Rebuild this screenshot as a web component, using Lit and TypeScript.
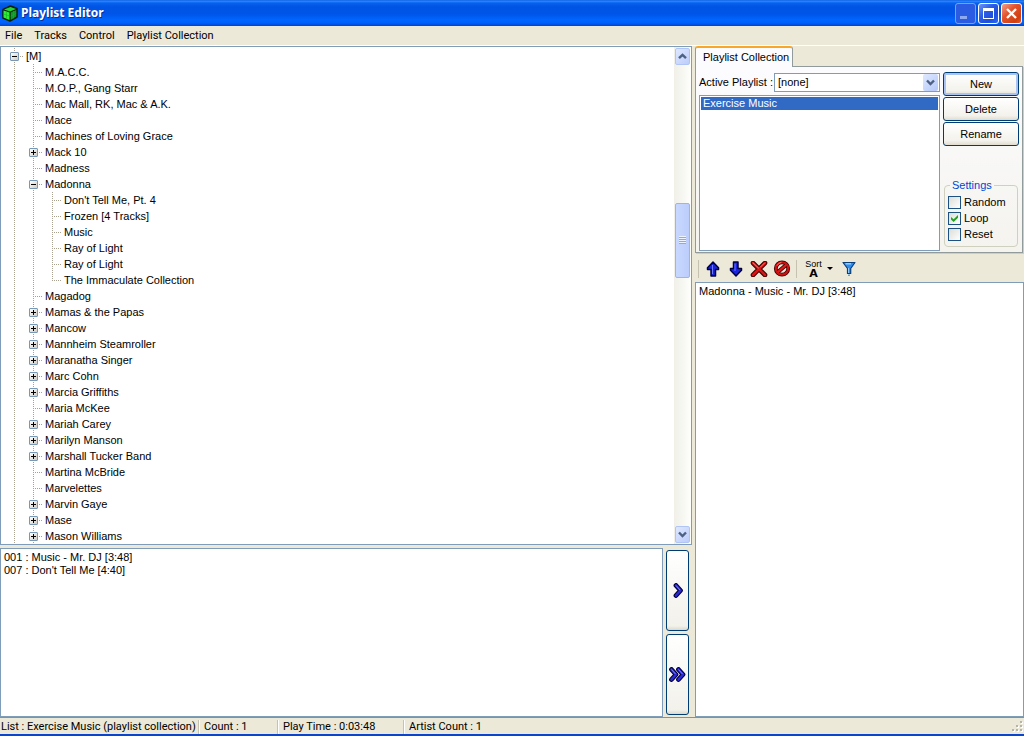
import { LitElement, html, css, svg } from "lit";
import { customElement, state } from "lit/decorators.js";

type Row = { depth: number; text: string; box?: "plus" | "minus"; last?: boolean };

const rows: Row[] = [
  { depth: 0, text: "[M]", box: "minus" },
  { depth: 1, text: "M.A.C.C." },
  { depth: 1, text: "M.O.P., Gang Starr" },
  { depth: 1, text: "Mac Mall, RK, Mac & A.K." },
  { depth: 1, text: "Mace" },
  { depth: 1, text: "Machines of Loving Grace" },
  { depth: 1, text: "Mack 10", box: "plus" },
  { depth: 1, text: "Madness" },
  { depth: 1, text: "Madonna", box: "minus" },
  { depth: 2, text: "Don't Tell Me, Pt. 4" },
  { depth: 2, text: "Frozen [4 Tracks]" },
  { depth: 2, text: "Music" },
  { depth: 2, text: "Ray of Light" },
  { depth: 2, text: "Ray of Light" },
  { depth: 2, text: "The Immaculate Collection", last: true },
  { depth: 1, text: "Magadog" },
  { depth: 1, text: "Mamas & the Papas", box: "plus" },
  { depth: 1, text: "Mancow", box: "plus" },
  { depth: 1, text: "Mannheim Steamroller", box: "plus" },
  { depth: 1, text: "Maranatha Singer", box: "plus" },
  { depth: 1, text: "Marc Cohn", box: "plus" },
  { depth: 1, text: "Marcia Griffiths", box: "plus" },
  { depth: 1, text: "Maria McKee" },
  { depth: 1, text: "Mariah Carey", box: "plus" },
  { depth: 1, text: "Marilyn Manson", box: "plus" },
  { depth: 1, text: "Marshall Tucker Band", box: "plus" },
  { depth: 1, text: "Martina McBride" },
  { depth: 1, text: "Marvelettes" },
  { depth: 1, text: "Marvin Gaye", box: "plus" },
  { depth: 1, text: "Mase", box: "plus" },
  { depth: 1, text: "Mason Williams", box: "plus" },
];

const cube = html`<svg width="16" height="17" viewBox="0 0 16 17" aria-hidden="true">
  <path d="M1 4.5 8.5 1 15 3.5V12L8 16 1 13Z" fill="#0a2a10" stroke="#06200c" stroke-width="1.6" stroke-linejoin="round"/>
  <path d="M2 4.5 8.5 2 14 4 8 6.5Z" fill="#25d436"/>
  <path d="M1.5 5.5 7.5 7.5V15L1.5 12.5Z" fill="#2ff02f"/>
  <path d="M8.7 7.5 14.3 5V11.6L8.7 15Z" fill="#12952a"/>
  <path d="M4.5 6.5V14M1.5 9l6 2M11.5 6v7.5M8.7 11.3l5.6-3" stroke="#14b428" stroke-width=".6" fill="none"/>
</svg>`;

const chevron = (up: boolean) => html`<svg width="9" height="7" viewBox="0 0 9 7" aria-hidden="true">
  <path d=${up ? "M1 5.2 4.5 1.8 8 5.2" : "M1 1.5 4.5 5 8 1.5"} fill="none" stroke="#4d6185" stroke-width="2.4"/></svg>`;

const arrow = (down: boolean) => html`<svg width="14" height="16" viewBox="0 0 14 16" aria-hidden="true">
  <path transform=${down ? "rotate(180 7 8)" : ""} d="M7 1 12.5 6.7V8.5H9.5V15H5V8.5H1.5V6.7Z" fill="#1a24e0" stroke="#00003c" stroke-width="1.5" stroke-linejoin="round"/>
  <path d=${down ? "M6 2.5V10" : "M6.5 4V13"} stroke="#6c78ff" stroke-width="1"/></svg>`;

const cross = html`<svg width="18" height="16" viewBox="0 0 18 16" aria-hidden="true">
  <path d="M3 2 15 14M15 2 3 14" stroke="#3a0000" stroke-width="4.6" stroke-linecap="round"/>
  <path d="M3 2 15 14M15 2 3 14" stroke="#d81414" stroke-width="2.6" stroke-linecap="round"/>
  <path d="M3 1.8 8.5 7M14.5 2 10.5 6" stroke="#ff7a70" stroke-width="1" stroke-linecap="round"/></svg>`;

const forbid = html`<svg width="18" height="17" viewBox="0 0 18 17" aria-hidden="true">
  <circle cx="9" cy="8.5" r="6.2" fill="#ece9d8" stroke="#3a0000" stroke-width="3.8"/>
  <circle cx="9" cy="8.5" r="6.2" fill="none" stroke="#d01010" stroke-width="2.2"/>
  <path d="M5.5 11.5 12.5 5.5" stroke="#3a0000" stroke-width="4"/>
  <path d="M4.8 12.1 13.2 4.9" stroke="#e01818" stroke-width="2.2"/>
  <path d="M4 5.6A6 6 0 0 1 8.500 2.300" fill="none" stroke="#ff7a70" stroke-width="1"/></svg>`;

const funnel = html`<svg width="14" height="16" viewBox="0 0 14 16" aria-hidden="true">
  <path d="M1 1.5H13L8.7 7.5V12.5H5.5V7.5Z" fill="#2f8cf0" stroke="#0b3f7c" stroke-width="1.2" stroke-linejoin="round"/>
  <path d="M3.5 2.8H9" stroke="#a8dcff" stroke-width="1.2"/><path d="M6.5 7V12" stroke="#8ccaff"/>
  <path d="M7 13.5V15" stroke="#3f90e0" stroke-width="1.6"/></svg>`;

const step = (x: number) => svg`
  <path d=${`M${x} 2.5 l4.5 5 -4.5 5`} fill="none" stroke="#00003c" stroke-width="4.8" stroke-linecap="round" stroke-linejoin="round"/>
  <path d=${`M${x} 2.5 l4.5 5 -4.5 5`} fill="none" stroke="#2a2ad8" stroke-width="2.6" stroke-linecap="round" stroke-linejoin="round"/>
  <path d=${`M${x} 2.5 l4 4.5`} fill="none" stroke="#7c84ff" stroke-width="1"/>`;

@customElement("app-root")
export class AppRoot extends LitElement {
  @state() private loop = true;

  static styles = css`
    :host {
      display: flex;
      flex-direction: column;
      height: 100vh;
      box-sizing: border-box;
      overflow: hidden;
      background: #ece9d8;
      border-bottom: 2px solid #0a45d0;
      color: #000;
      font: 11px/13px "Liberation Sans", Arial, sans-serif;
    }
    * { box-sizing: border-box; }
    svg { display: block; flex: none; }
    button { font: inherit; color: inherit; padding: 0; margin: 0; border: 0; background: none; }
    ul { list-style: none; margin: 0; padding: 0; }

    .title {
      display: flex;
      align-items: center;
      height: 26px;
      flex: none;
      padding: 0 2px;
      gap: 3px;
      background: linear-gradient(#0a50d8 0, #2b8cff 1px, #0862ee 3px, #0054e3 7px, #0055e8 14px, #0066ff 20px, #0060fa 23px, #0043cf 26px);
    }
    .title h1 {
      flex: 1;
      margin: 0;
      font: bold 12px/16px "Noto Sans", "Open Sans", sans-serif;
      color: #fff;
      text-shadow: 1px 1px #0a2f9c;
    }
    .caption { display: flex; gap: 2px; }
    .cap {
      display: grid;
      place-items: center;
      width: 21px;
      height: 21px;
      border: 1px solid #fff;
      border-radius: 3px;
      background: linear-gradient(135deg, #6c95f5, #2a5ce4 40%, #1d4fdc 70%, #2c6af6);
    }
    .cap.min { border-color: #7f9ef0; background: #2a5be0; }
    .cap.close { background: linear-gradient(135deg, #f2a088, #e2532c 40%, #d1400f 80%, #e05a30); }

    .menu { display: flex; height: 20px; flex: none; padding: 3px 5px; gap: 12px; border-bottom: 1px solid #fff; font: 11px/14px Roboto, "Noto Sans", sans-serif; }

    .body {
      display: grid;
      grid-template-columns: minmax(0, 1fr) 329px;
      column-gap: 3px;
      flex: 1;
      min-height: 0;
    }
    .left { display: grid; grid-template-rows: minmax(0, 1fr) 169px; row-gap: 3px; min-height: 0; }
    .tree { display: flex; border: 1px solid #7f9db9; background: #fff; overflow: hidden; }
    .rows { flex: 1; padding: 1px 4px 0; }
    .row { display: flex; height: 16px; line-height: 16px; white-space: nowrap; }
    .cell {
      display: grid;
      place-content: center;
      width: 19px;
      flex: none;
      background-repeat: no-repeat;
      background-position: 9px 0, 9px 8px;
      background-image: repeating-linear-gradient(#a8a090 0 1px, #fff 1px 2px);
      background-size: 1px 100%, 0 0;
    }
    .cell.tee, .cell.end {
      background-image: repeating-linear-gradient(#a8a090 0 1px, #fff 1px 2px), repeating-linear-gradient(90deg, #a8a090 0 1px, #fff 1px 2px);
      background-size: 1px 100%, 9px 1px;
    }
    .cell.end { background-size: 1px 9px, 9px 1px; }
    .label { padding-left: 2px; }
    .box {
      display: grid;
      place-items: center;
      width: 9px;
      height: 9px;
      border: 1px solid #7898b5;
      border-radius: 1px;
      background: linear-gradient(135deg, #fff, #d0ccc0);
    }

    .scroll { display: flex; flex-direction: column; width: 17px; flex: none; background: linear-gradient(90deg, #f0f0e8, #fefefb); padding: 1px 0; }
    .arrow {
      display: grid;
      place-items: center;
      height: 17px;
      width: 15px;
      margin-left: 1px;
      flex: none;
      border: 1px solid #b0c4f5;
      border-radius: 2px;
      background: linear-gradient(135deg, #dfe8ff, #bccdfa);
    }
    .track { display: grid; grid-template-rows: 138fr 75fr 249fr; flex: 1; }
    .thumb {
      grid-row: 2;
      display: grid;
      place-items: center;
      width: 15px;
      margin-left: 1px;
      border: 1px solid #9cb4ee;
      border-radius: 2px;
      background: linear-gradient(90deg, #c8d8ff, #bccdfb);
    }
    .grip { width: 7px; height: 8px; background: repeating-linear-gradient(#eef4ff 0 1px, #8caae8 1px 2px); }

    .lower { display: grid; grid-template-columns: minmax(0, 1fr) 23px; column-gap: 3px; padding-right: 3px; }
    .list { border: 1px solid #7f9db9; background: #fff; overflow: hidden; white-space: nowrap; }
    .tracks { padding: 2px 3px; }
    .steps { display: grid; grid-template-rows: 1fr 1fr; gap: 3px; padding: 2px 0; }
    .btn { border: 1px solid #003c74; border-radius: 3px; background: linear-gradient(#fff, #f3f2ec 80%, #e0dccf); }
    .steps .btn { display: grid; place-items: center; background: linear-gradient(#fff, #f2f1ea 95%, #dcd8ca); }

    .right { display: flex; flex-direction: column; min-width: 0; min-height: 0; }
    .tab {
      align-self: flex-start;
      height: 21px;
      padding: 0 3px 0 7px;
      border: 1px solid #919b9c;
      border-top: 2px solid #f9a72b;
      border-bottom: 0;
      border-radius: 3px 3px 0 0;
      background: #fcfcfe;
      margin-bottom: -1px;
      z-index: 1;
    }
    .panel {
      display: grid;
      grid-template-columns: minmax(0, 1fr) 76px;
      gap: 3px;
      height: 187px;
      flex: none;
      margin-right: 1px;
      padding: 5px 3px 1px;
      border: 1px solid #919b9c;
      background: linear-gradient(#fcfcfe, #f4f3ee);
      box-shadow: 1px 1px #d0cebf;
    }
    .pick { display: grid; grid-template-rows: 21px minmax(0, 1fr); row-gap: 2px; min-height: 0; }
    .active { display: flex; align-items: center; gap: 1px; }
    .active label { white-space: nowrap; }
    .combo { flex: 1; min-width: 0; display: grid; border: 1px solid #7f9db9; background: #fff; }
    .combo > * { grid-area: 1 / 1; }
    .combo select { appearance: none; border: 0; margin: 0; padding: 0 20px 0 3px; width: 100%; font: inherit; color: #000; background: #fff; border-radius: 0; }
    .drop {
      justify-self: end;
      align-self: center;
      margin-right: 1px;
      display: grid;
      place-items: center;
      width: 15px;
      height: 17px;
      border-radius: 2px;
      pointer-events: none;
      background: linear-gradient(135deg, #dfe8ff, #b4c8f8);
    }
    .names { padding: 1px; }
    .names li { padding-left: 2px; background: #316ac5; color: #fff; }
    .side { display: flex; flex-direction: column; gap: 1px; }
    .side .btn { height: 24px; flex: none; }
    .side .focus { box-shadow: inset 0 0 0 2px #a9c3f2; }
    fieldset { display: grid; gap: 3px; margin: auto 1px 4px; padding: 4px 3px 5px; border: 1px solid #d0d0bf; border-radius: 4px; min-width: 0; }
    legend { padding: 0 2px; margin-left: 2px; color: #0046d5; }
    .check { display: flex; align-items: center; gap: 3px; }
    .check input { appearance: none; display: grid; place-items: center; margin: 0; width: 13px; height: 13px; flex: none; border: 1px solid #1c5180; background: linear-gradient(135deg, #dcdcd7, #fff); }
    .check input:checked::before { content: ""; width: 7px; height: 7px; background: #21a121; clip-path: polygon(0 30%, 38% 62%, 100% 0, 100% 38%, 38% 100%, 0 66%); }

    .tools { display: flex; align-items: center; height: 27px; flex: none; margin-top: 2px; padding-left: 3px; }
    .tools button { display: flex; align-items: center; justify-content: center; width: 23px; }
    .sep { width: 1px; height: 18px; margin-right: 2px; background: #c5c2b2; }
    .tools button + .sep { margin: 0 7px 0 3px; }
    .tools .sort { gap: 5px; width: 30px; margin-right: 3px; }
    .word { display: grid; justify-items: center; font: 9px/9px "Liberation Sans", sans-serif; }
    .word b { font: bold 11px/9px "DejaVu Sans", sans-serif; }
    .caret { border: 3px solid transparent; border-top-color: #000; border-bottom: 0; }
    .queue { flex: 1; min-height: 0; padding: 2px 3px; }

    .status { display: flex; align-items: center; height: 17px; flex: none; padding-top: 2px; border-top: 1px solid #8f8f86; font: 11px/14px Roboto, "Noto Sans", sans-serif; white-space: nowrap; }
    .status span { padding: 0 4px; border-left: 1px solid #fff; box-shadow: -1px 0 #c5c2b2; }
    .status .s1 { width: 199px; padding: 0 1px; border: 0; box-shadow: none; }
    .s2 { width: 79px; }
    .s3 { width: 126px; }
    .s4 { flex: 1; }
  `;

  private row(r: Row) {
    const cells = [];
    for (let i = 0; i < r.depth; i++) cells.push(html`<i class="cell"></i>`);
    return html`<li class="row" role="treeitem" aria-level=${r.depth + 1}>
      ${cells}<span class="cell ${r.last ? "end" : "tee"}">${r.box
        ? html`<button class="box" aria-label="Toggle ${r.text}"><svg width="5" height="5" viewBox="0 0 5 5">
            <path d=${r.box === "plus" ? "M0 2h5v1H0zM2 0h1v5H2z" : "M0 2h5v1H0z"} fill="#000"/></svg></button>`
        : ""}</span><span class="label">${r.text}</span>
    </li>`;
  }

  render() {
    return html`
      <header class="title">
        ${cube}
        <h1>Playlist Editor</h1>
        <div class="caption">
          <button class="cap min" aria-label="Minimize"><svg width="13" height="13" viewBox="0 0 13 13"><path d="M1 9h7v3H1z" fill="#8fa9f0"/></svg></button>
          <button class="cap" aria-label="Maximize"><svg width="13" height="13" viewBox="0 0 13 13"><path d="M1 1h11v11H1zM2 4v7h9V4z" fill="#fff" fill-rule="evenodd"/></svg></button>
          <button class="cap close" aria-label="Close"><svg width="13" height="13" viewBox="0 0 13 13"><path d="M2 2 11 11M11 2 2 11" stroke="#fff" stroke-width="2.4"/></svg></button>
        </div>
      </header>
      <nav class="menu">
        <button>File</button><button>Tracks</button><button>Control</button><button>Playlist Collection</button>
      </nav>
      <main class="body">
        <section class="left">
          <div class="tree">
            <ul class="rows" role="tree" aria-label="Artists">${rows.map((r) => this.row(r))}</ul>
            <div class="scroll">
              <button class="arrow" aria-label="Scroll up">${chevron(true)}</button>
              <div class="track"><div class="thumb"><i class="grip"></i></div></div>
              <button class="arrow" aria-label="Scroll down">${chevron(false)}</button>
            </div>
          </div>
          <div class="lower">
            <ul class="list tracks"><li>001 : Music - Mr. DJ [3:48]</li><li>007 : Don't Tell Me [4:40]</li></ul>
            <div class="steps">
              <button class="btn" aria-label="Add track"><svg width="17" height="15" viewBox="0 0 17 15">${step(7)}</svg></button>
              <button class="btn" aria-label="Add all tracks"><svg width="17" height="15" viewBox="0 0 17 15">${step(2.5)}${step(9.5)}</svg></button>
            </div>
          </div>
        </section>
        <section class="right">
          <button class="tab">Playlist Collection</button>
          <div class="panel">
            <div class="pick">
              <div class="active">
                <label for="active">Active Playlist :</label>
                <div class="combo">
                  <select id="active"><option>[none]</option><option>Exercise Music</option></select>
                  <span class="drop">${chevron(false)}</span>
                </div>
              </div>
              <ul class="list names"><li>Exercise Music</li></ul>
            </div>
            <div class="side">
              <button class="btn focus">New</button>
              <button class="btn">Delete</button>
              <button class="btn">Rename</button>
              <fieldset>
                <legend>Settings</legend>
                <label class="check"><input type="checkbox" />Random</label>
                <label class="check"><input type="checkbox" .checked=${this.loop} @change=${() => (this.loop = !this.loop)} />Loop</label>
                <label class="check"><input type="checkbox" />Reset</label>
              </fieldset>
            </div>
          </div>
          <div class="tools">
            <i class="sep"></i>
            <button aria-label="Move up">${arrow(false)}</button>
            <button aria-label="Move down">${arrow(true)}</button>
            <button aria-label="Remove">${cross}</button>
            <button aria-label="Clear">${forbid}</button>
            <i class="sep"></i>
            <button class="sort"><span class="word">Sort<b>A</b></span><i class="caret"></i></button>
            <button aria-label="Filter">${funnel}</button>
          </div>
          <ul class="list queue"><li>Madonna - Music - Mr. DJ [3:48]</li></ul>
        </section>
      </main>
      <footer class="status">
        <span class="s1">List : Exercise Music (playlist collection)</span>
        <span class="s2">Count : 1</span>
        <span class="s3">Play Time : 0:03:48</span>
        <span class="s4">Artist Count : 1</span>
        <svg width="12" height="12" viewBox="0 0 12 12" aria-hidden="true">
          <path d="M9 1h2v2H9zM9 5h2v2H9zM5 5h2v2H5zM9 9h2v2H9zM5 9h2v2H5zM1 9h2v2H1z" fill="#fff"/>
          <path d="M8 0h2v2H8zM8 4h2v2H8zM4 4h2v2H4zM8 8h2v2H8zM4 8h2v2H4zM0 8h2v2H0z" fill="#b8b4a3"/>
        </svg>
      </footer>
    `;
  }
}
